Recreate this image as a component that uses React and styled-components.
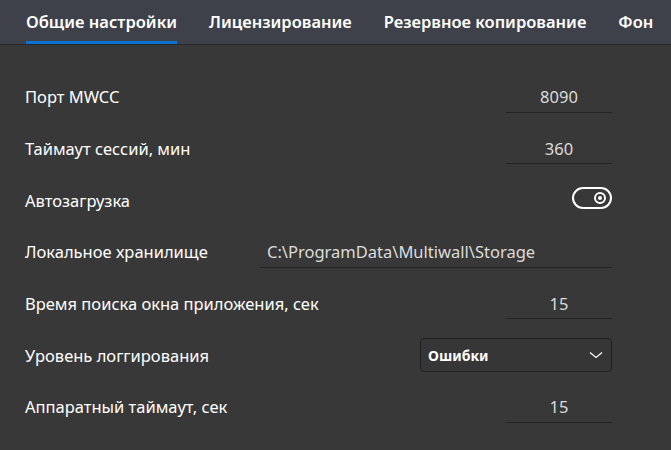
import React from "react";
import styled, { createGlobalStyle } from "styled-components";

const Global = createGlobalStyle`
  html, body { margin: 0; padding: 0; background: #383838; }
  body { font-family: "Noto Sans", "Segoe UI", sans-serif; }
  * { box-sizing: border-box; }
`;

const Page = styled.div`
  width: 671px;
  height: 450px;
  background: #383838;
  overflow: hidden;
  display: flex;
  flex-direction: column;
`;

const TabBar = styled.div`
  height: 45px;
  background: #3e414a;
  border-bottom: 1px solid #26272b;
  display: flex;
  padding-left: 10px;
  flex-shrink: 0;
`;

const Tab = styled.div`
  position: relative;
  padding: 0 16px;
  height: 44px;
  display: flex;
  align-items: center;
  padding-bottom: 1px;
  color: #ffffff;
  font-size: 16.5px;
  font-weight: 600;
  white-space: nowrap;
  &::after {
    content: "";
    display: ${(p) => (p.$active ? "block" : "none")};
    position: absolute;
    left: 16px;
    right: 16px;
    bottom: 0;
    height: 3px;
    background: #0a73cf;
  }
`;

const Content = styled.div`
  padding: 26px 59px 0 25px;
  display: flex;
  flex-direction: column;
`;

const Row = styled.div`
  height: 51.67px;
  display: flex;
  align-items: center;
  justify-content: space-between;
  gap: 20px;
`;

const Label = styled.div`
  color: #ffffff;
  font-size: 16.5px;
  white-space: nowrap;
`;

const Field = styled.input`
  width: ${(p) => p.$width}px;
  height: 31px;
  margin-top: 1px;
  background: transparent;
  border: none;
  border-bottom: 1px solid #232323;
  color: #dcdcdc;
  font-family: inherit;
  font-size: 16.5px;
  text-align: ${(p) => (p.$left ? "left" : "center")};
  padding: 0 7px 0;
  outline: none;
`;

const Select = styled.div`
  width: 192px;
  height: 34px;
  border: 1px solid #222222;
  border-radius: 4px;
  background: #363636;
  display: flex;
  align-items: center;
  justify-content: space-between;
  padding: 0 8px 0 7px;
  color: #ffffff;
  font-size: 14px;
  font-weight: 700;
`;

const Toggle = styled.div`
  width: 40px;
  height: 22px;
  margin-bottom: 5px;
  border: 2px solid #ffffff;
  border-radius: 11px;
  display: flex;
  align-items: center;
  justify-content: flex-end;
  padding-right: 4px;
`;

const Knob = styled.div`
  width: 12px;
  height: 12px;
  border: 2px solid #ffffff;
  border-radius: 50%;
  display: flex;
  align-items: center;
  justify-content: center;
  &::after {
    content: "";
    width: 4px;
    height: 4px;
    border-radius: 50%;
    background: #ffffff;
  }
`;

export default function App() {
  return (
    <Page>
      <Global />
      <TabBar>
        <Tab $active>Общие настройки</Tab>
        <Tab>Лицензирование</Tab>
        <Tab>Резервное копирование</Tab>
        <Tab>Фон</Tab>
      </TabBar>
      <Content>
        <Row>
          <Label>Порт MWCC</Label>
          <Field $width={106} defaultValue="8090" />
        </Row>
        <Row>
          <Label>Таймаут сессий, мин</Label>
          <Field $width={106} defaultValue="360" />
        </Row>
        <Row>
          <Label>Автозагрузка</Label>
          <Toggle>
            <Knob />
          </Toggle>
        </Row>
        <Row>
          <Label>Локальное хранилище</Label>
          <Field $width={352} $left defaultValue="C:\ProgramData\Multiwall\Storage" />
        </Row>
        <Row>
          <Label>Время поиска окна приложения, сек</Label>
          <Field $width={106} defaultValue="15" />
        </Row>
        <Row>
          <Label>Уровень логгирования</Label>
          <Select>
            <span>Ошибки</span>
            <svg width="14" height="8" viewBox="0 0 14 8">
              <path d="M1 1.5 L7 6.5 L13 1.5" fill="none" stroke="#ffffff" strokeWidth="1.2" />
            </svg>
          </Select>
        </Row>
        <Row>
          <Label>Аппаратный таймаут, сек</Label>
          <Field $width={106} defaultValue="15" />
        </Row>
      </Content>
    </Page>
  );
}
